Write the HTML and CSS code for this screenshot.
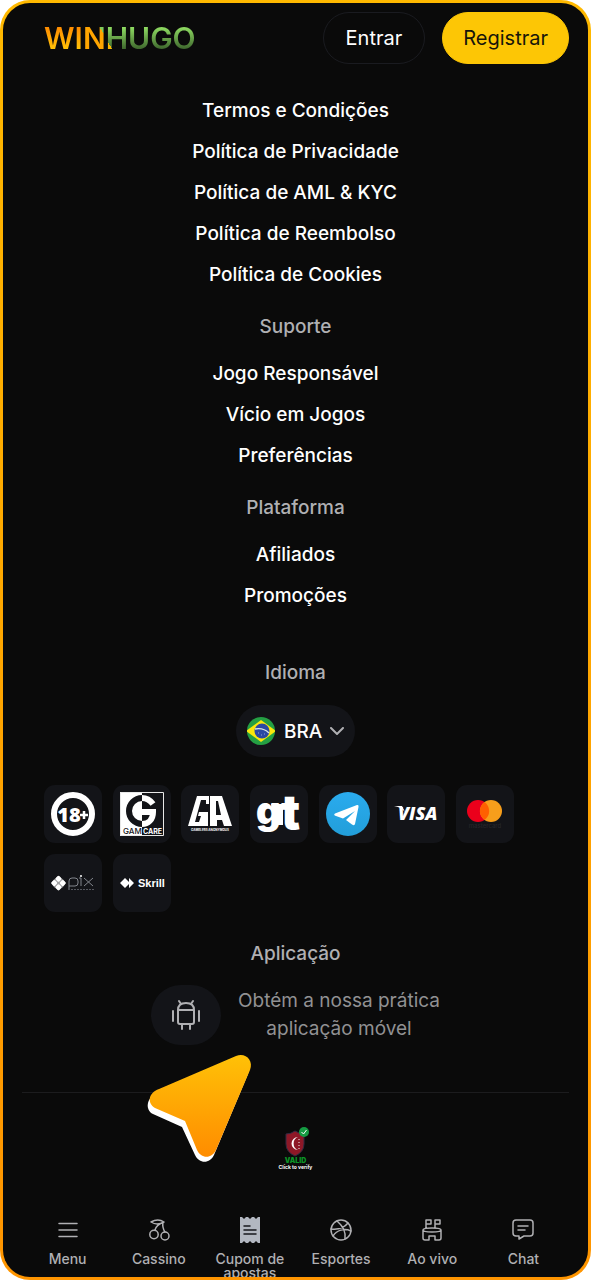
FILE: index.html
```html
<!DOCTYPE html>
<html lang="pt-BR">
<head>
    <meta charset="UTF-8">
    <meta name="viewport" content="width=device-width, initial-scale=1.0">
    <title>WinHugo</title>
    <link rel="stylesheet" href="styles.css">
</head>
<body>
    <div class="frame">
        <div class="screen">
            <header class="header">
                <a href="#" class="logo"><span class="logo-win">WI</span><span class="logo-n">N</span><span class="logo-h">H</span><span class="logo-hugo">UGO</span></a>
                <div class="header-buttons">
                    <button type="button" class="btn btn-outline">Entrar</button>
                    <button type="button" class="btn btn-primary">Registrar</button>
                </div>
            </header>

            <main class="content">
                <ul class="links">
                    <li><a href="#">Termos e Condições</a></li>
                    <li><a href="#">Política de Privacidade</a></li>
                    <li><a href="#">Política de AML &amp; KYC</a></li>
                    <li><a href="#">Política de Reembolso</a></li>
                    <li><a href="#">Política de Cookies</a></li>
                </ul>

                <h2 class="title">Suporte</h2>
                <ul class="links">
                    <li><a href="#">Jogo Responsável</a></li>
                    <li><a href="#">Vício em Jogos</a></li>
                    <li><a href="#">Preferências</a></li>
                </ul>

                <h2 class="title">Plataforma</h2>
                <ul class="links">
                    <li><a href="#">Afiliados</a></li>
                    <li><a href="#">Promoções</a></li>
                </ul>

                <label class="title title-language" for="language">Idioma</label>
                <div class="language">
                    <svg class="flag" viewBox="0 0 28 28" aria-hidden="true">
                        <clipPath id="flag-round"><circle cx="14" cy="14" r="14"/></clipPath>
                        <g clip-path="url(#flag-round)">
                            <rect width="28" height="28" fill="#249f43"/>
                            <path d="M-1 14 14 3l15 11-15 11z" fill="#f9e70c"/>
                            <circle cx="15" cy="14" r="7.5" fill="#2b49a3"/>
                            <path d="M8 12c5-1 10 0 14 4" fill="none" stroke="#d9e6e6" stroke-width="1.3"/>
                            <path d="M11 16h1m2 2h1m2-1h1" stroke="#8ea2dc" stroke-width="1"/>
                        </g>
                    </svg>
                    <select id="language">
                        <option selected>BRA</option>
                        <option>ENG</option>
                    </select>
                    <svg class="chevron" viewBox="0 0 14 8" aria-hidden="true"><path d="m1 1 6 6 6-6"/></svg>
                </div>

                <div class="partners">
                    <a href="#" class="tile" aria-label="18+">
                        <svg viewBox="0 0 44 44">
                            <circle cx="22" cy="22" r="19" fill="none" stroke="#fff" stroke-width="6"/>
                            <text x="18" y="30" class="t-age" text-anchor="middle">18</text>
                            <path d="M29 23h8m-4-4v8" stroke="#fff" stroke-width="2.500"/>
                        </svg>
                    </a>
                    <a href="#" class="tile" aria-label="GamCare">
                        <svg viewBox="0 0 44 44">
                            <clipPath id="half-left"><path d="M0 0h22v44H0z"/></clipPath>
                            <path d="M0 0h22v44H0z" fill="#fff"/>
                            <path d="M.5.5h43v43H.5z" fill="none" stroke="#e8e8e8"/>
                            <g clip-path="url(#half-left)">
                                <circle cx="22" cy="19" r="13" fill="none" stroke="#131418" stroke-width="6"/>
                            </g>
                            <path d="M22 6c5 0 8 2 11 6M22 20h11c0 8-5 12-11 12" fill="none" stroke="#fff" stroke-width="6"/>
                            <path d="M22 35h21v8H22z" fill="#131418"/>
                            <text x="3" y="42" class="t-gam">GAM</text>
                            <text x="23" y="42" class="t-care">CARE</text>
                        </svg>
                    </a>
                    <a href="#" class="tile" aria-label="Gamblers Anonymous">
                        <svg viewBox="0 0 44 44">
                            <path d="M9 4h12v8h-3V8h-6L5 30h6l2-6h-3l1-4h9v14H0z" fill="#fff"/>
                            <path d="M9 8h4L7 30H3z" fill="#fff"/>
                            <path d="M22 4h12l10 30h-8l-2-6h-5v6h-7zM28 9v14h5L30 9z" fill="#fff" fill-rule="evenodd"/>
                            <text x="22" y="39" class="t-anon" text-anchor="middle">GAMBLERS ANONYMOUS</text>
                        </svg>
                    </a>
                    <a href="#" class="tile" aria-label="GT">
                        <svg viewBox="0 0 44 44"><text x="-1" y="32" class="t-gt">g</text><text x="24" y="37" class="t-gt t-gt-tall">t</text><path d="M14 12h16v4h-4v17h-7z" fill="#fff"/></svg>
                    </a>
                    <a href="#" class="tile" aria-label="Telegram">
                        <svg viewBox="0 0 44 44">
                            <linearGradient id="telegram" x2="0" y2="1"><stop stop-color="#2aabee"/><stop offset="1" stop-color="#229ed9"/></linearGradient>
                            <circle cx="22" cy="22" r="22" fill="url(#telegram)"/>
                            <path d="M9 21.500 31 13q2-.5 1.500 2L29 32q-.5 2-3 .5L20 28l9-9-12 7.500-7-2.500q-3-1-1-2.500z" fill="#fff"/>
                        </svg>
                    </a>
                    <a href="#" class="tile" aria-label="Visa">
                        <svg viewBox="0 0 44 44"><text x="4" y="28" class="t-visa">VISA</text><path d="M0 14h8l3 6q-4-5-11-6z" fill="#fff"/></svg>
                    </a>
                    <a href="#" class="tile" aria-label="Mastercard">
                        <svg viewBox="0 0 44 44">
                            <circle cx="15" cy="19" r="11" fill="#eb001b"/>
                            <circle cx="28" cy="19" r="11" fill="#f79e1b"/>
                            <path d="M21.500 10a11 11 0 0 1 0 18 11 11 0 0 1 0-18z" fill="#ff5f00"/>
                            <text x="22" y="36" class="t-master" text-anchor="middle">mastercard</text>
                        </svg>
                    </a>
                    <a href="#" class="tile" aria-label="Pix">
                        <svg viewBox="0 0 44 44">
                            <g transform="rotate(45 7.500 22)" fill="#fff">
                                <rect x="2" y="16.500" width="5" height="5" rx="1.500"/>
                                <rect x="8" y="16.500" width="5" height="5" rx="1.500"/>
                                <rect x="2" y="22.500" width="5" height="5" rx="1.500"/>
                                <rect x="8" y="22.500" width="5" height="5" rx="1.500"/>
                            </g>
                            <path d="M3 18.500 7.500 15l4.500 3.500 3 3.500-3 4-4.500 3.500L3 26l-3-4z" fill="#fff" opacity=".6"/>
                            <g fill="none" stroke="#82858c"><path d="M18 29V20q0-3 3-3h3q3 0 3 3v2q0 3-3 3h-6M28 17h2v8M33 17l9 8M42 17l-9 8"/><path d="M20 28.500h24" stroke="#55575e" stroke-dasharray="2 1"/></g>
                            <circle cx="30" cy="15" r="1" fill="#fff"/>
                        </svg>
                    </a>
                    <a href="#" class="tile" aria-label="Skrill">
                        <svg viewBox="0 0 44 44"><path d="m0 22 5-5 4 4v-4l5 5-5 5v-4l-4 4z" fill="#fff"/><text x="18" y="26" class="t-skrill">Skrill</text></svg>
                    </a>
                </div>

                <h2 class="title title-app">Aplicação</h2>
                <div class="app">
                    <button type="button" class="app-button" aria-label="Android">
                        <svg viewBox="0 0 30 32" aria-hidden="true">
                            <path d="M7 11q0-7 8-7t8 7v12q0 2-2 2H9q-2 0-2-2zM7 11h16M10 5 8 2M20 5l2-3M11 25v5M19 25v5M2 12v10M28 12v10"/>
                        </svg>
                    </button>
                    <p>Obtém a nossa prática<br>aplicação móvel</p>
                </div>

                <hr class="divider">

                <a href="#" class="license">
                    <svg viewBox="0 0 26 30" aria-hidden="true">
                        <path d="M11 4q5 3 9 3v10q0 8-9 12-9-4-9-12V7q5 0 9-3z" fill="#8e1827" stroke="#302a42"/>
                        <path d="M14 10a6.500 6.500 0 1 0 0 13 7 7 0 0 1 0-13z" fill="#fff"/>
                        <path d="M15 12v10" stroke="#eee" stroke-dasharray="1 2"/>
                        <circle cx="20" cy="5" r="5" fill="#159b42"/>
                        <path d="m17.500 5 2 2 3-4" fill="none" stroke="#fff"/>
                    </svg>
                    <strong>VALID</strong>
                    <span>Click to verify</span>
                </a>
            </main>

            <nav class="bottom-nav">
                <a href="#">
                    <svg viewBox="0 0 28 28"><path d="M5 7.500h18M5 14h18M5 20.500h18"/></svg>
                    <span>Menu</span>
                </a>
                <a href="#">
                    <svg viewBox="0 0 28 28"><circle cx="9" cy="18.500" r="4.200"/><circle cx="20" cy="20" r="4"/><path d="M19 6q-6-4-13 0 6 4 13 0zM19 6q-8 3-9 8M18 6.500q-1 5 2 9.500"/></svg>
                    <span>Cassino</span>
                </a>
                <a href="#">
                    <svg viewBox="0 0 28 28"><path class="coupon" d="M4 1h2l2 2 2-2h2l2 2 2-2h2l2 2 2-2h2v26h-2l-2-2-2 2h-2l-2-2-2 2h-2l-2-2-2 2H4z"/><path class="coupon-lines" d="M8 10h6M8 14h12M8 18h12"/></svg>
                    <span>Cupom de apostas</span>
                </a>
                <a href="#">
                    <svg viewBox="0 0 28 28"><circle cx="14" cy="14" r="10"/><path d="M10 5c6 5 9 11 8 18M4 13c8 1 13-1 17-6M6 20c4-6 11-8 18-5"/></svg>
                    <span>Esportes</span>
                </a>
                <a href="#">
                    <svg viewBox="0 0 28 28"><path d="M8 12V4h5v4H8M17 12V4h5v4h-5M5 14q0-2 9-2t9 2-9 2-9-2v8q0 2 2 2h4v-4h6v4h4q2 0 2-2v-8"/></svg>
                    <span>Ao vivo</span>
                </a>
                <a href="#">
                    <svg viewBox="0 0 28 28"><path d="M7 4h14q3 0 3 3v10q0 3-3 3h-6l-5 3v-3H7q-3 0-3-3V7q0-3 3-3zM9 10h10M9 14h7"/></svg>
                    <span>Chat</span>
                </a>
            </nav>

            <!-- pointer over the page -->
            <svg class="pointer" viewBox="0 0 108 110" aria-hidden="true">
                <linearGradient id="pointer-fill" x2="0" y2="1"><stop stop-color="#ffc107"/><stop offset="1" stop-color="#ff8c00"/></linearGradient>
                <path d="M12 35 89 2c9-4 18 4 14 14L69 97c-4 9-15 9-19 0L37 69 8 56C0 52 1 40 12 35z" transform="translate(-2 4)" fill="#fff"/>
                <path d="M12 35 89 2c9-4 18 4 14 14L69 96c-4 9-15 9-19 0L38 67 8 54C0 49 1 39 12 35z" fill="url(#pointer-fill)"/>
            </svg>
        </div>
    </div>
</body>
</html>
```
FILE: styles.css
```css
* {
    box-sizing: border-box;
}

body {
    margin: 0;
    background: #fff;
    font-family: Inter, "Noto Sans", sans-serif;
    font-size: 19px;
    font-weight: 500;
    color: #fff;
}

a {
    color: inherit;
    text-decoration: none;
}

.frame {
    height: 100vh;
    padding: 3px;
    border-radius: 30px;
    background: linear-gradient(#ffb900, #ff9500);
}

.screen {
    position: relative;
    display: flex;
    flex-direction: column;
    height: 100%;
    overflow: hidden;
    border-radius: 27px;
    background: #0a0a0a;
}

.header {
    display: flex;
    align-items: center;
    justify-content: space-between;
    padding: 9px 19px 0 41px;
}

.logo {
    font-size: 30px;
    font-weight: 600;
    line-height: 40px;
}

.logo span {
    background: linear-gradient(#ff8c00 20%, #ffc107 80%);
    background-clip: text;
    -webkit-background-clip: text;
    color: transparent;
}

.logo .logo-n {
    background-image: linear-gradient(55deg, #ffa500 76%, #7fc95b 76%);
}

.logo .logo-h {
    background-image: linear-gradient(55deg, #ffb900 24%, transparent 24%), linear-gradient(#8fdc62 20%, #3f682e 80%);
}

.logo .logo-hugo {
    background-image: linear-gradient(#8fdc62 20%, #3f682e 80%);
}

.header-buttons {
    display: flex;
    gap: 17px;
}

.btn {
    height: 52px;
    padding: 0 22px;
    border: 1px solid #1a1b20;
    border-radius: 26px;
    background: none;
    color: #fff;
    font: inherit;
    font-size: 20px;
    font-weight: 400;
}

.btn-primary {
    padding: 0 20px;
    border-color: #fdc605;
    background: #fdc605;
    color: #17150a;
}

.content {
    display: flex;
    flex-direction: column;
    align-items: center;
    padding: 26px 19px 0;
}

.links {
    margin: 0;
    padding: 0;
    list-style: none;
    text-align: center;
    line-height: 41px;
}

.title {
    margin: 18px 0 12px;
    font-size: 19px;
    font-weight: 500;
    line-height: 28px;
    color: #b0b0b3;
}

.title-language {
    margin-top: 43px;
    margin-bottom: 18px;
}

.language {
    display: flex;
    align-items: center;
    position: relative;
    height: 52px;
    border-radius: 26px;
    background: #131418;
}

.flag {
    position: absolute;
    left: 11px;
    width: 28px;
    height: 28px;
    pointer-events: none;
}

.language select {
    appearance: none;
    height: 52px;
    padding: 0 30px 0 48px;
    border: 0;
    border-radius: 26px;
    background: none;
    color: #fff;
    font: inherit;
}

.chevron {
    position: absolute;
    right: 11px;
    width: 14px;
    height: 8px;
    fill: none;
    stroke: #b0b0b3;
    stroke-width: 2;
    stroke-linecap: round;
    pointer-events: none;
}

.partners {
    display: grid;
    grid-template-columns: repeat(7, 58px);
    justify-content: space-between;
    align-self: stretch;
    row-gap: 11px;
    padding: 28px 55px 0 22px;
}

.tile {
    display: grid;
    place-items: center;
    height: 58px;
    border-radius: 11px;
    background: #131418;
}

.tile svg {
    width: 44px;
    height: 44px;
    fill: #fff;
    overflow: visible;
}

.t-age {
    font-size: 20px;
    font-weight: 800;
    font-family: "Open Sans", sans-serif;
}

.t-gam,
.t-care {
    font-size: 8px;
    fill: #131418;
}

.t-care {
    font-size: 7px;
    font-weight: 700;
    fill: #fff;
}

.t-anon {
    font-size: 3px;
    font-weight: 700;
}

.t-gt {
    font-size: 38px;
    font-weight: 900;
}

.t-gt-tall {
    font-size: 48px;
}

.t-visa {
    font-family: "Open Sans", sans-serif;
    font-size: 18px;
    font-weight: 800;
    font-style: italic;
}

.t-master {
    font-size: 6px;
    fill: #26262a;
}

.t-skrill {
    font-family: "Liberation Sans", sans-serif;
    font-size: 11px;
    font-weight: 700;
}

.title-app {
    margin-top: 28px;
    margin-bottom: 17px;
}

.app {
    display: flex;
    align-items: center;
    gap: 17px;
}

.app-button {
    display: grid;
    place-items: center;
    width: 70px;
    height: 60px;
    padding: 0;
    border: 0;
    border-radius: 30px;
    background: #131418;
}

.app-button svg {
    width: 30px;
    height: 32px;
    fill: none;
    stroke: #b0b0b3;
    stroke-width: 2;
    stroke-linecap: round;
}

.app p {
    margin: 0;
    font-weight: 400;
    line-height: 28px;
    text-align: center;
    color: #919193;
}

.divider {
    width: 100%;
    margin: 47px 0 0;
    border: 0;
    border-top: 1px solid #1c1c1e;
}

.license {
    display: flex;
    flex-direction: column;
    align-items: center;
    margin-top: 34px;
    font-size: 5px;
    font-weight: 700;
    line-height: 7px;
}

.license svg {
    width: 26px;
    height: 30px;
    margin-left: 4px;
}

.license strong {
    font-size: 7px;
    color: #0c9426;
}

.bottom-nav {
    display: grid;
    grid-template-columns: repeat(6, 1fr);
    flex: none;
    height: 61px;
    margin-top: auto;
    padding: 0 19px;
    font-size: 14px;
    line-height: 14px;
    color: #b0b0b3;
}

.bottom-nav a {
    display: flex;
    flex-direction: column;
    align-items: center;
    gap: 8px;
    text-align: center;
}

.bottom-nav svg {
    flex: none;
    width: 28px;
    height: 28px;
    fill: none;
    stroke: #b0b0b3;
    stroke-width: 1.5;
    stroke-linecap: round;
    stroke-linejoin: round;
}

.bottom-nav .coupon {
    fill: #b2b7c0;
    stroke: none;
}

.bottom-nav .coupon-lines {
    stroke: #17181c;
}

.pointer {
    position: absolute;
    left: 144px;
    top: 1051px;
    width: 108px;
    height: 110px;
    overflow: visible;
    pointer-events: none;
}
```
